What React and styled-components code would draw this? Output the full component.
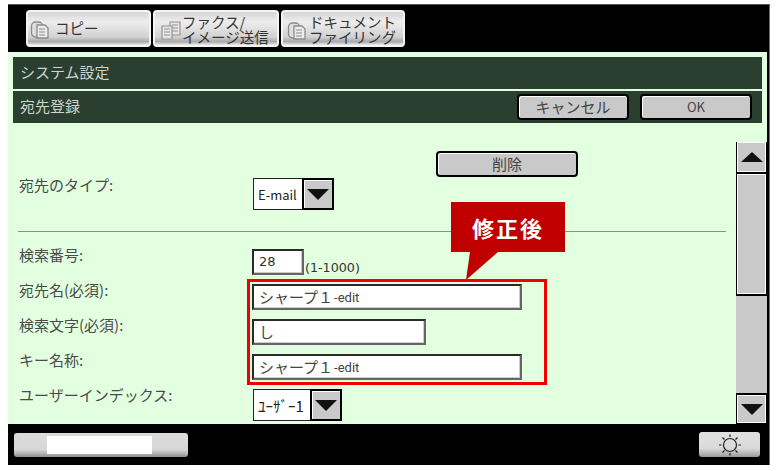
import React from "react";
import styled, { createGlobalStyle } from "styled-components";

const GlobalStyle = createGlobalStyle`
  html, body {
    margin: 0;
    padding: 0;
    background: #ffffff;
  }
  body {
    font-family: "Noto Sans CJK JP", "Noto Sans", sans-serif;
  }
`;

const Screen = styled.div`
  position: relative;
  width: 761px;
  height: 460px;
  margin: 4px 0 0 8px;
  border-top: 1px solid #55555f;
  border-right: 1px solid #6a6f78;
  display: flex;
  flex-direction: column;
  background: #000;
`;

const TopBar = styled.div`
  height: 47px;
  box-sizing: border-box;
  padding: 5px 0 0 18px;
  display: flex;
  gap: 2px;
`;

const Tab = styled.div`
  width: ${(p) => p.$width}px;
  height: 37px;
  box-sizing: border-box;
  border: 2px solid #f4f4f4;
  border-radius: 4px;
  background: linear-gradient(#d6d6d6 0%, #ededed 30%, #d2d2d2 75%, #a9a9a9 90%, #ececec 100%);
  display: flex;
  align-items: center;
  padding-left: ${(p) => p.$pad}px;
  gap: ${(p) => p.$gap}px;
  color: #333;
`;

const TabIcon = styled.svg`
  flex: none;
  width: 20px;
  height: 20px;
  margin-top: ${(p) => p.$top || 0}px;
`;

const TabText = styled.span`
  font-size: 14.5px;
  line-height: 15px;
  white-space: pre;
  padding-bottom: ${(p) => (p.$single ? 2 : 0)}px;
`;

const Panel = styled.div`
  flex: none;
  height: 372px;
  width: 759px;
  background: #e2ffe0;
  display: flex;
  flex-direction: column;
  box-sizing: border-box;
  padding-top: 5px;
`;

const TitleBar = styled.div`
  width: 749px;
  height: 32px;
  margin: 0 0 2px 5px;
  flex: none;
  box-sizing: border-box;
  background: #2a3f30;
  color: #cfd4cf;
  font-size: 15px;
  display: flex;
  align-items: center;
  padding: 0 10px 0 7px;
`;

const TitleText = styled.span`
  flex: 1;
  padding-bottom: 3px;
`;

const Button = styled.div`
  width: ${(p) => p.$width}px;
  height: 26px;
  box-sizing: border-box;
  border: 2px solid #000;
  border-radius: 4px;
  background: #c9c9c9;
  box-shadow: inset 1px 1px 0 #fff;
  color: #444;
  font-size: ${(p) => p.$size || 15}px;
  padding-bottom: 2px;
  display: flex;
  align-items: center;
  justify-content: center;
`;

const ButtonGroup = styled.div`
  display: flex;
  gap: 11px;
`;

const Body = styled.div`
  flex: 1;
  min-height: 0;
  display: flex;
  align-items: flex-start;
`;

const Form = styled.div`
  width: 728px;
  flex: none;
  box-sizing: border-box;
  padding: 26px 0 0 11px;
  display: flex;
  flex-direction: column;
`;

const DeleteRow = styled.div`
  padding-left: 417px;
  height: 26px;
`;

const Row = styled.div`
  display: flex;
  align-items: flex-start;
  margin-top: ${(p) => p.$top}px;
`;

const Label = styled.div`
  width: 233px;
  flex: none;
  color: #4a4a4a;
  font-size: 15px;
  line-height: 12px;
  padding-top: ${(p) => p.$top || 0}px;
  white-space: nowrap;
`;

const Divider = styled.div`
  width: 708px;
  height: 1px;
  margin: 21px 0 0 -1px;
  background: #8a8f8a;
`;

const Select = styled.div`
  height: 32px;
  margin-left: 1px;
  box-sizing: border-box;
  border: 1px solid #222;
  background: #fff;
  display: flex;
  color: #222;
`;

const SelectValue = styled.div`
  width: ${(p) => p.$width}px;
  font-size: ${(p) => p.$size || 13}px;
  display: flex;
  align-items: center;
  padding-left: 4px;
  box-sizing: border-box;
  white-space: nowrap;
`;

const SelectArrow = styled.div`
  width: 32px;
  box-sizing: border-box;
  border: 2px solid #000;
  margin: -1px -1px -1px 0;
  background: #c9c9c9;
  box-shadow: inset 1px 1px 0 #fff;
  display: flex;
  align-items: center;
  justify-content: center;
`;

const DownMark = styled.div`
  width: 0;
  height: 0;
  border-left: 11px solid transparent;
  border-right: 11px solid transparent;
  border-top: 11px solid #111;
`;

const UpMark = styled.div`
  width: 0;
  height: 0;
  border-left: 11px solid transparent;
  border-right: 11px solid transparent;
  border-bottom: 10px solid #111;
`;

const Field = styled.div`
  width: ${(p) => p.$width}px;
  height: 26px;
  box-sizing: border-box;
  background: #fff;
  border-top: 2px solid #2a2a2a;
  border-left: 2px solid #2a2a2a;
  border-right: 2px solid #666;
  border-bottom: 2px solid #666;
  box-shadow: inset -1px -1px 0 #ccc;
  color: #444;
  font-size: 15px;
  display: flex;
  align-items: center;
  padding: 0 0 2px 5px;
`;

const SmallLatin = styled.span`
  font-family: "Roboto", sans-serif;
  font-size: 13px;
  margin-left: 1px;
  padding-top: 2px;
`;

const NumberText = styled.span`
  font-family: "DejaVu Sans", sans-serif;
  font-size: 13px;
  color: #333;
`;

const Range = styled.span`
  font-family: "DejaVu Sans", sans-serif;
  font-size: 12.7px;
  line-height: 16px;
  color: #333;
  align-self: flex-end;
  margin: 0 0 -1px 1px;
`;

const ScrollBar = styled.div`
  width: 31px;
  height: 299px;
  margin-top: 17px;
  flex: none;
  display: flex;
  flex-direction: column;
  gap: 2px;
  background: #000;
  border-right: 2px solid #000;
`;

const ScrollButton = styled.div`
  height: ${(p) => p.$height}px;
  flex: none;
  box-sizing: border-box;
  margin: 0 1px;
  background: #c9c9c9;
  border: 1px solid #fff;
  display: flex;
  align-items: center;
  justify-content: center;
`;

const ScrollThumb = styled.div`
  flex: none;
  height: 120px;
  margin: 0 1px;
  box-sizing: border-box;
  background: #c9c9c9;
  border: 1px solid #fff;
`;

const ScrollTrack = styled.div`
  flex: none;
  height: 97px;
  background: #c9c9c9;
`;

const BottomBar = styled.div`
  flex: 1;
  display: flex;
  justify-content: space-between;
  align-items: center;
  padding: 0 9px 0 6px;
`;

const StatusBar = styled.div`
  width: 174px;
  height: 24px;
  box-sizing: border-box;
  border-radius: 3px;
  background: linear-gradient(#dcdcdc 0%, #d6d6d6 70%, #8f8f8f 100%);
  padding: 3px 36px 3px 33px;
`;

const StatusFill = styled.div`
  height: 100%;
  background: #fff;
`;

const LightButton = styled.div`
  width: 61px;
  height: 25px;
  border-radius: 3px;
  background: linear-gradient(#e0e0e0 0%, #dadada 65%, #9a9a9a 100%);
  display: flex;
  align-items: center;
  justify-content: center;
`;

const Highlight = styled.div`
  position: absolute;
  left: 239px;
  top: 274px;
  width: 300px;
  height: 106px;
  box-sizing: border-box;
  border: 3px solid #f00000;
  pointer-events: none;
`;

const Tag = styled.div`
  position: absolute;
  left: 443px;
  top: 197px;
  width: 114px;
  height: 50px;
  background: #c00000;
  color: #fff;
  font-size: 22px;
  font-weight: 700;
  letter-spacing: 2px;
  display: flex;
  align-items: center;
  justify-content: center;
`;

const TagPointer = styled.svg`
  position: absolute;
  left: 458px;
  top: 247px;
  width: 32px;
  height: 28px;
`;

// copier mark: a rounded back sheet with a lined page on top
function CopyIcon({ top }) {
  return (
    <TabIcon $top={top} viewBox="0 0 20 20" fill="#dedede" stroke="#8c8c8c" strokeWidth="1.3">
      <rect x="1.5" y="2" width="11" height="15" rx="4" />
      <path d="M7 5h8l3 3v10H7z" fill="#ececec" />
      <path d="M9 9h6M9 12h6M9 15h6" strokeWidth="1" />
    </TabIcon>
  );
}

function FaxIcon() {
  return (
    <TabIcon $top={4} viewBox="0 0 20 20" fill="#e6e6e6" stroke="#949494" strokeWidth="1.2">
      <path d="M9 1h10v13H9z" />
      <path d="M11 4h6M11 7h6M11 10h6" strokeWidth="1" />
      <path d="M1 5h10v13H1z" />
      <path d="M3 8h6M3 11h6M3 14h6" strokeWidth="1" />
    </TabIcon>
  );
}

function SunIcon() {
  return (
    <svg width="28" height="24" viewBox="0 0 28 24" fill="none" stroke="#222">
      <circle cx="14" cy="12" r="6.5" strokeWidth="1.2" />
      <path
        d="M14 1.5v2.5M14 20v2.5M3 12h2.5M22.5 12H25M6.5 4.5l2 2M19.5 17.5l2 2M21.5 4.5l-2 2M8.5 17.5l-2 2"
        strokeWidth="1.2"
      />
    </svg>
  );
}

export default function App() {
  return (
    <>
      <GlobalStyle />
      <Screen>
        <TopBar>
          <Tab $width={125} $pad={2} $gap={5}>
            <CopyIcon top={2} />
            <TabText $single>コピー</TabText>
          </Tab>
          <Tab $width={126} $pad={6} $gap={1}>
            <FaxIcon />
            <TabText>{"ファクス/\nイメージ送信"}</TabText>
          </Tab>
          <Tab $width={124} $pad={4} $gap={2}>
            <CopyIcon top={4} />
            <TabText>{"ドキュメント\nファイリング"}</TabText>
          </Tab>
        </TopBar>
        <Panel>
          <TitleBar>
            <TitleText>システム設定</TitleText>
          </TitleBar>
          <TitleBar>
            <TitleText>宛先登録</TitleText>
            <ButtonGroup>
              <Button $width={112}>キャンセル</Button>
              <Button $width={112} $size={13}>OK</Button>
            </ButtonGroup>
          </TitleBar>
          <Body>
            <Form>
              <DeleteRow>
                <Button $width={142}>削除</Button>
              </DeleteRow>
              <Row $top={1}>
                <Label $top={1}>宛先のタイプ:</Label>
                <Select>
                  <SelectValue $width={48}>E-mail</SelectValue>
                  <SelectArrow><DownMark /></SelectArrow>
                </Select>
              </Row>
              <Divider />
              <Row $top={17}>
                <Label>検索番号:</Label>
                <Field $width={52}><NumberText>28</NumberText></Field>
                <Range>(1-1000)</Range>
              </Row>
              <Row $top={9}>
                <Label>宛先名(必須):</Label>
                <Field $width={270}>シャープ１<SmallLatin>-edit</SmallLatin></Field>
              </Row>
              <Row $top={9}>
                <Label>検索文字(必須):</Label>
                <Field $width={174}>し</Field>
              </Row>
              <Row $top={9}>
                <Label>キー名称:</Label>
                <Field $width={270}>シャープ１<SmallLatin>-edit</SmallLatin></Field>
              </Row>
              <Row $top={9}>
                <Label>ユーザーインデックス:</Label>
                <Select>
                  <SelectValue $width={56} $size={15}>ﾕｰｻﾞｰ1</SelectValue>
                  <SelectArrow><DownMark /></SelectArrow>
                </Select>
              </Row>
            </Form>
            <ScrollBar>
              <ScrollButton $height={30}><UpMark /></ScrollButton>
              <ScrollThumb />
              <ScrollTrack />
              <ScrollButton $height={28}><DownMark /></ScrollButton>
            </ScrollBar>
          </Body>
        </Panel>
        <BottomBar>
          <StatusBar><StatusFill /></StatusBar>
          <LightButton><SunIcon /></LightButton>
        </BottomBar>
        <Highlight />
        <Tag>修正後</Tag>
        <TagPointer viewBox="0 0 32 28">
          <polygon points="4,0 32,0 0,28" fill="#c00000" />
        </TagPointer>
      </Screen>
    </>
  );
}
